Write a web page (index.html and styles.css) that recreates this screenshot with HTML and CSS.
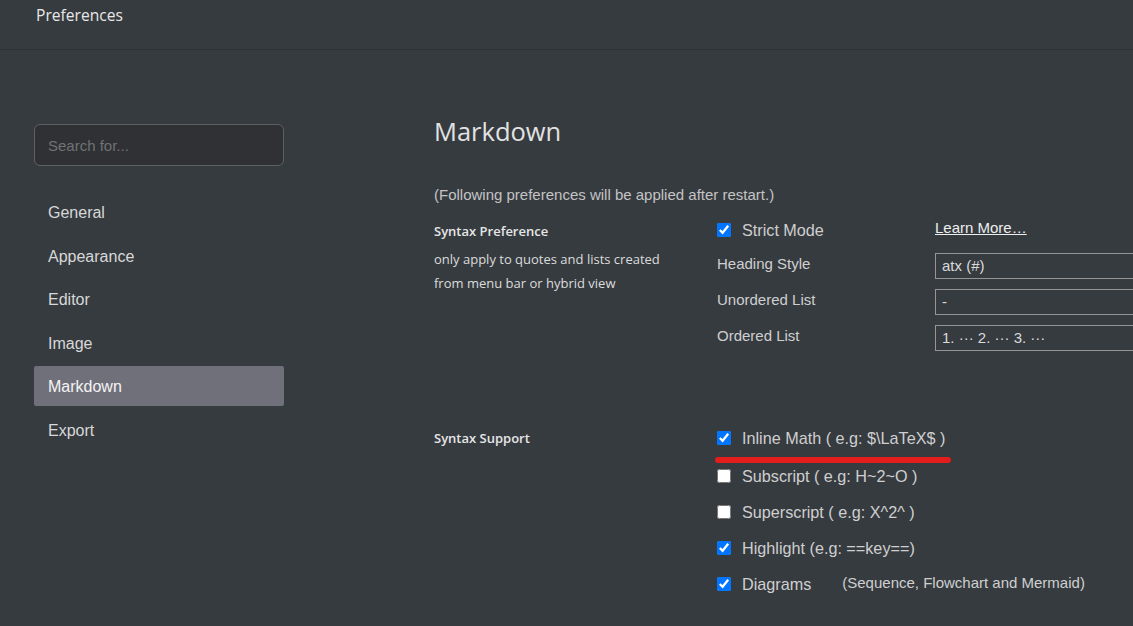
FILE: index.html
```html
<!DOCTYPE html>
<html lang="en">
<head>
<meta charset="utf-8">
<title>Preferences</title>
<link rel="stylesheet" href="styles.css">
</head>
<body>
<header class="titlebar"><span class="title">Preferences</span></header>
<div class="layout">
  <aside class="sidebar">
    <div class="search">Search for...</div>
    <nav class="nav">
      <div class="nav-item">General</div>
      <div class="nav-item">Appearance</div>
      <div class="nav-item">Editor</div>
      <div class="nav-item">Image</div>
      <div class="nav-item active">Markdown</div>
      <div class="nav-item">Export</div>
    </nav>
  </aside>
  <main class="content">
    <h1 class="heading">Markdown</h1>
    <p class="note">(Following preferences will be applied after restart.)</p>
    <section class="group group-pref">
      <div class="group-info">
        <div class="group-title">Syntax Preference</div>
        <div class="group-desc">only apply to quotes and lists created<br>from menu bar or hybrid view</div>
      </div>
      <div class="options">
        <div class="opt-row">
          <label class="check"><input type="checkbox" checked><span>Strict Mode</span></label>
          <a class="learn">Learn More…</a>
        </div>
        <div class="opt-row">
          <span class="opt-label">Heading Style</span>
          <div class="box">atx (#)</div>
        </div>
        <div class="opt-row">
          <span class="opt-label">Unordered List</span>
          <div class="box">-</div>
        </div>
        <div class="opt-row">
          <span class="opt-label">Ordered List</span>
          <div class="box">1. ··· 2. ··· 3. ···</div>
        </div>
      </div>
    </section>
    <section class="group group-support">
      <div class="group-info">
        <div class="group-title">Syntax Support</div>
      </div>
      <div class="options checks">
        <div class="check-row first">
          <label class="check"><input type="checkbox" checked><span>Inline Math ( e.g: $\LaTeX$ )</span></label>
          <span class="mark"></span>
        </div>
        <div class="check-row">
          <label class="check"><input type="checkbox"><span>Subscript ( e.g: H~2~O )</span></label>
        </div>
        <div class="check-row">
          <label class="check"><input type="checkbox"><span>Superscript ( e.g: X^2^ )</span></label>
        </div>
        <div class="check-row">
          <label class="check"><input type="checkbox" checked><span>Highlight (e.g: ==key==)</span></label>
        </div>
        <div class="check-row">
          <label class="check"><input type="checkbox" checked><span>Diagrams</span></label>
          <span class="hint">(Sequence, Flowchart and Mermaid)</span>
        </div>
      </div>
    </section>
  </main>
</div>
</body>
</html>
```
FILE: styles.css
```css
html, body {
  margin: 0;
  padding: 0;
}
body {
  background: #363b40;
  color: #d4d4d4;
  font-family: "Liberation Sans", Arial, sans-serif;
  width: 1133px;
  height: 626px;
  overflow: hidden;
}
.titlebar {
  height: 49px;
  border-bottom: 1px solid #2e3236;
  box-sizing: content-box;
  display: flex;
  align-items: flex-start;
  padding-left: 36px;
}
.title {
  font-family: "Open Sans", sans-serif;
  font-size: 15.6px;
  line-height: 30px;
  color: #e8e8e8;
}
.layout {
  display: flex;
}
.sidebar {
  width: 250px;
  margin-left: 34px;
  padding-top: 74px;
  flex: none;
}
.search {
  height: 42px;
  box-sizing: border-box;
  border: 1px solid #5e6064;
  border-radius: 6px;
  background: #2f3134;
  color: #6f7276;
  font-size: 15px;
  line-height: 42px;
  padding-left: 13px;
}
.nav {
  margin-top: 26px;
  display: flex;
  flex-direction: column;
  gap: 3.6px;
}
.nav-item {
  height: 40px;
  line-height: 42px;
  padding-left: 14px;
  font-size: 16px;
  color: #d8d8d8;
  border-radius: 2px;
}
.nav-item.active {
  background: #70707b;
  color: #f4f4f4;
}
.content {
  margin-left: 150px;
  padding-top: 63px;
  flex: 1;
}
.heading {
  margin: 0;
  font-family: "Open Sans", sans-serif;
  font-weight: 400;
  font-size: 25.5px;
  line-height: 36px;
  color: #e2e2e2;
}
.note {
  margin: 36px 0 0;
  font-size: 15px;
  line-height: 20px;
  color: #c4c4c4;
}
.group {
  display: grid;
  grid-template-columns: 283px 1fr;
}
.group-pref {
  margin-top: 12px;
}
.group-support {
  margin-top: 74px;
}
.group-info {
  padding-top: 4px;
  font-family: "Open Sans", sans-serif;
  font-size: 13px;
  color: #dcdcdc;
}
.group-support .group-info {
  padding-top: 3px;
}
.group-title {
  font-weight: 600;
  line-height: 20px;
  color: #e6e6e6;
}
.group-desc {
  margin-top: 6px;
  line-height: 24px;
}
.options {
  display: flex;
  flex-direction: column;
  gap: 10px;
}
.opt-row {
  display: grid;
  grid-template-columns: 218px 230px;
  height: 26px;
}
.opt-label {
  font-size: 15px;
  line-height: 21px;
  color: #cfcfcf;
}
.box {
  box-sizing: border-box;
  height: 26px;
  border: 1px solid #959595;
  padding-left: 6px;
  font-size: 15px;
  line-height: 24px;
  color: #dadada;
}
.learn {
  font-size: 15px;
  line-height: 21px;
  color: #eeeeee;
  text-decoration: underline;
  cursor: pointer;
}
.check {
  display: flex;
  align-items: center;
  height: 26px;
  font-size: 16.2px;
  color: #cfcfcf;
}
.check input {
  width: 14px;
  height: 14px;
  margin: 0 11px 0 0;
  accent-color: #0075ff;
}
.checks {
  gap: 10px;
}
.check-row {
  display: flex;
  align-items: center;
  height: 26px;
  position: relative;
}
.check-row.first {
  margin-bottom: 2px;
}
.mark {
  position: absolute;
  left: -2px;
  top: 32px;
  width: 236px;
  height: 6px;
  border-radius: 3px;
  background: #e31c1c;
}
.hint {
  margin-left: 31px;
  font-size: 15px;
  color: #cfcfcf;
  position: relative;
  top: -2px;
}
```
